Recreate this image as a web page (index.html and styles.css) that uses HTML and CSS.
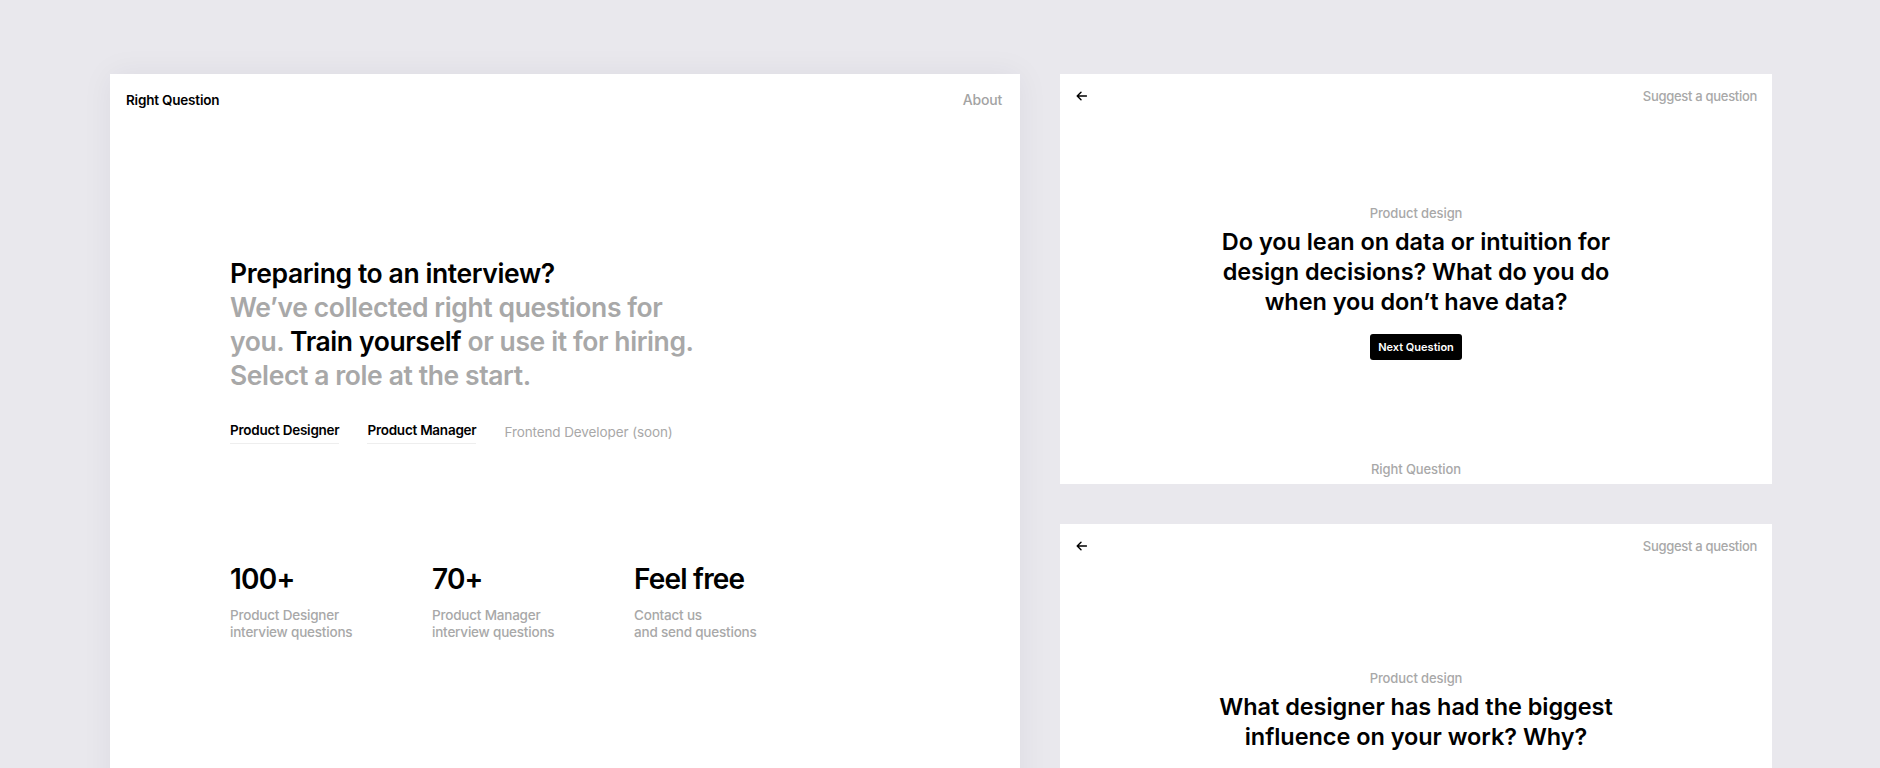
FILE: index.html
```html
<!DOCTYPE html>
<html lang="en">
<head>
<meta charset="utf-8">
<title>Right Question</title>
<link rel="stylesheet" href="styles.css">
</head>
<body>
<div class="board">
  <div class="home">
    <header class="home-top">
      <span class="brand">Right Question</span>
      <a class="about">About</a>
    </header>
    <section class="intro">
      <h1 class="hero"><span class="dark">Preparing to an interview?</span><br>We’ve collected right questions for<br>you. <span class="dark">Train yourself</span> or use it for hiring.<br>Select a role at the start.</h1>
      <nav class="roles">
        <a class="role">Product Designer</a>
        <a class="role">Product Manager</a>
        <span class="role soon">Frontend Developer (soon)</span>
      </nav>
      <div class="stats">
        <div class="stat">
          <div class="num">100+</div>
          <div class="sub">Product Designer<br>interview questions</div>
        </div>
        <div class="stat">
          <div class="num">70+</div>
          <div class="sub">Product Manager<br>interview questions</div>
        </div>
        <div class="stat">
          <div class="num">Feel free</div>
          <div class="sub">Contact us<br>and send questions</div>
        </div>
      </div>
    </section>
  </div>
  <div class="side">
    <div class="qcard">
      <div class="qtop">
        <svg class="back" width="11" height="10" viewBox="0 0 11 10"><path d="M10.5 5H1.2M5 1.2L1.2 5L5 8.8" fill="none" stroke="#000" stroke-width="1.4" stroke-linecap="round" stroke-linejoin="round"/></svg>
        <span class="suggest">Suggest a question</span>
      </div>
      <div class="qmain">
        <div class="cat">Product design</div>
        <div class="qtext">Do you lean on data or intuition for<br>design decisions? What do you do<br>when you don’t have data?</div>
        <button class="next">Next Question</button>
      </div>
      <div class="qfoot">Right Question</div>
    </div>
    <div class="qcard">
      <div class="qtop">
        <svg class="back" width="11" height="10" viewBox="0 0 11 10"><path d="M10.5 5H1.2M5 1.2L1.2 5L5 8.8" fill="none" stroke="#000" stroke-width="1.4" stroke-linecap="round" stroke-linejoin="round"/></svg>
        <span class="suggest">Suggest a question</span>
      </div>
      <div class="qmain">
        <div class="cat">Product design</div>
        <div class="qtext">What designer has had the biggest<br>influence on your work? Why?</div>
        <button class="next">Next Question</button>
      </div>
      <div class="qfoot">Right Question</div>
    </div>
  </div>
</div>
</body>
</html>
```
FILE: styles.css
```css
html, body {
  margin: 0;
  height: 100%;
  overflow: hidden;
}
body {
  background: #e9e8ed;
  font-family: Inter, "Noto Sans", sans-serif;
  color: #000;
  -webkit-font-smoothing: antialiased;
}
.board {
  display: flex;
  align-items: flex-start;
  gap: 40px;
  padding: 74px 0 0 110px;
}
.home {
  width: 910px;
  height: 760px;
  background: #fff;
  box-shadow: 0 0 30px rgba(40, 40, 70, 0.06);
}
.home-top {
  display: flex;
  justify-content: space-between;
  padding: 16px 18px 0 16px;
  font-size: 13.5px;
  line-height: 20px;
  font-weight: 600;
  letter-spacing: -0.2px;
}
.about {
  color: #a3a3a3;
  font-weight: 500;
  font-size: 14px;
}
.intro {
  padding: 146px 0 0 120px;
}
.hero {
  margin: 0;
  font-size: 26.5px;
  line-height: 34px;
  font-weight: 600;
  letter-spacing: -0.4px;
  color: #a8a8a8;
}
.dark {
  color: #000;
}
.roles {
  display: flex;
  align-items: flex-start;
  gap: 28px;
  margin-top: 28px;
  font-size: 13.5px;
  line-height: 20px;
  letter-spacing: -0.25px;
}
.role {
  font-weight: 600;
  padding-bottom: 3px;
  border-bottom: 1px solid #eeeeee;
}
.role.soon {
  color: #a8a8a8;
  font-weight: 400;
  border-bottom: none;
  margin-top: 2px;
  letter-spacing: -0.1px;
}
.stats {
  display: grid;
  grid-template-columns: 202px 202px 202px;
  margin-top: 117px;
}
.num {
  font-size: 28px;
  line-height: 34px;
  font-weight: 600;
  letter-spacing: -0.8px;
}
.sub {
  margin-top: 11px;
  font-size: 13.5px;
  line-height: 17px;
  font-weight: 500;
  color: #a8a8a8;
  letter-spacing: -0.2px;
}
.side {
  width: 712px;
  display: flex;
  flex-direction: column;
  gap: 40px;
}
.qcard {
  height: 410px;
  background: #fff;
  display: flex;
  flex-direction: column;
}
.qtop {
  display: flex;
  justify-content: space-between;
  align-items: center;
  padding: 14px 15px 0 16px;
  height: 16px;
}
.back {
  display: block;
}
.suggest {
  font-size: 13px;
  line-height: 16px;
  font-weight: 500;
  color: #a8a8a8;
  letter-spacing: -0.3px;
}
.qmain {
  flex: 1;
  display: flex;
  flex-direction: column;
  align-items: center;
  justify-content: center;
  text-align: center;
}
.cat {
  font-size: 13px;
  line-height: 16px;
  font-weight: 500;
  color: #a8a8a8;
  letter-spacing: -0.1px;
}
.qtext {
  margin-top: 6px;
  font-size: 23.5px;
  line-height: 30px;
  font-weight: 600;
  letter-spacing: -0.05px;
}
.next {
  margin-top: 17px;
  height: 26px;
  width: 92px;
  border: none;
  border-radius: 3px;
  background: #000;
  color: #fff;
  font-family: Inter, "Noto Sans", sans-serif;
  font-size: 11px;
  font-weight: 600;
  padding: 0;
}
.qfoot {
  text-align: center;
  font-size: 13px;
  line-height: 16px;
  font-weight: 500;
  color: #a8a8a8;
  padding-bottom: 7px;
  letter-spacing: -0.1px;
}
```
